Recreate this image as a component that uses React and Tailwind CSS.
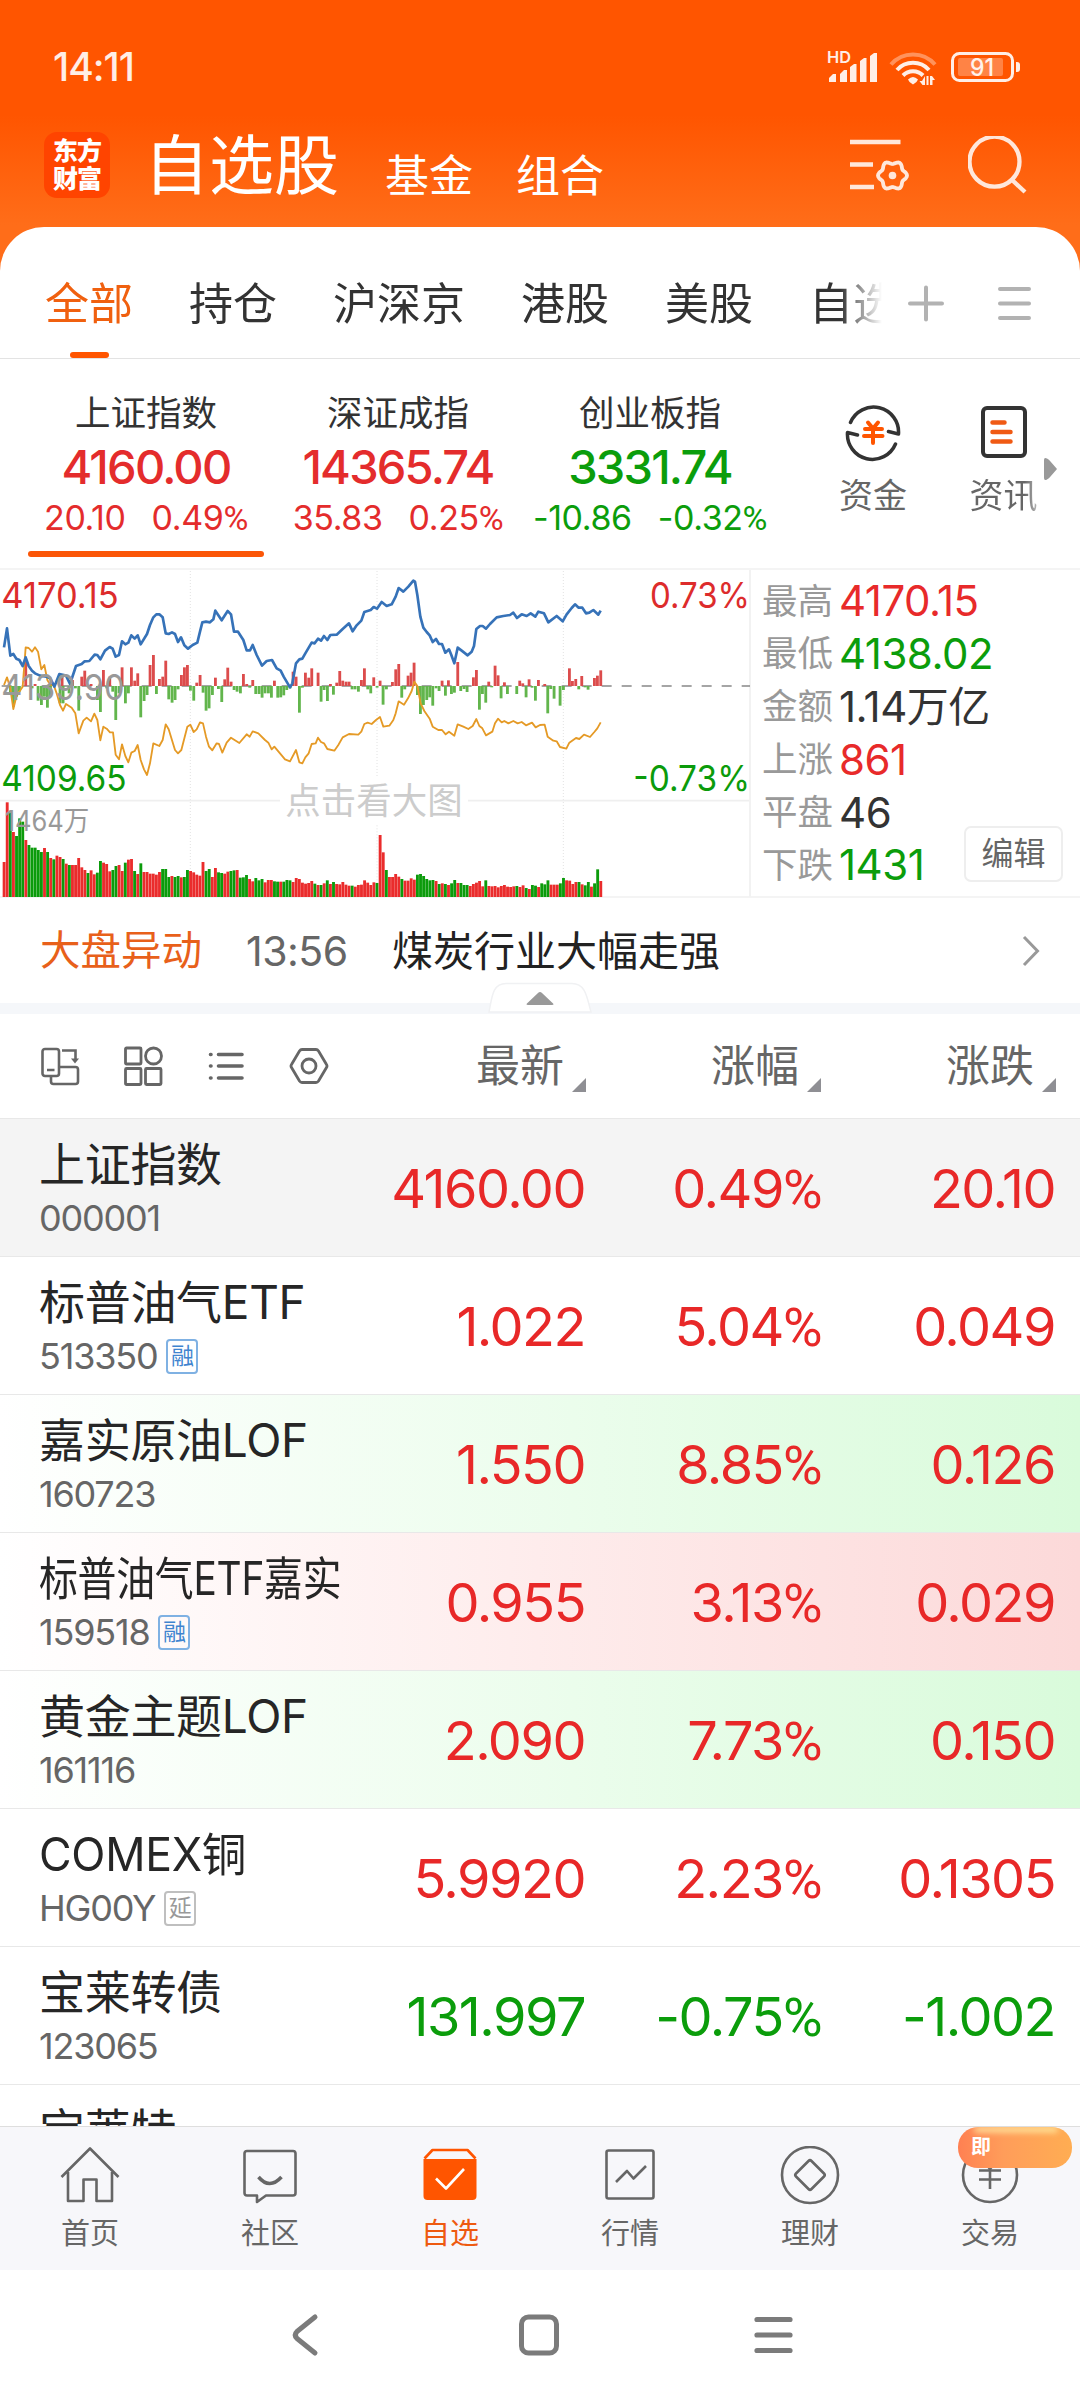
import React from 'react';
import clsx from 'clsx';

const tabs = ['全部', '持仓', '沪深京', '港股', '美股', '自选'];

const indices = [
  { name: '上证指数', value: '4160.00', change: '20.10', pct: '0.49%', up: true },
  { name: '深证成指', value: '14365.74', change: '35.83', pct: '0.25%', up: true },
  { name: '创业板指', value: '3331.74', change: '-10.86', pct: '-0.32%', up: false },
];

const stats = [
  { label: '最高', value: '4170.15', color: 'text-[#e82a2a]' },
  { label: '最低', value: '4138.02', color: 'text-[#0b9d0b]' },
  { label: '金额', value: '1.14万亿', color: 'text-[#333]' },
  { label: '上涨', value: '861', color: 'text-[#e82a2a]' },
  { label: '平盘', value: '46', color: 'text-[#333]' },
  { label: '下跌', value: '1431', color: 'text-[#0b9d0b]' },
];

const stocks = [
  { name: '上证指数', code: '000001', price: '4160.00', pct: '0.49%', change: '20.10', up: true, bg: 'bg-[#f4f4f4]' },
  { name: '标普油气ETF', code: '513350', tag: '融', price: '1.022', pct: '5.04%', change: '0.049', up: true },
  { name: '嘉实原油LOF', code: '160723', price: '1.550', pct: '8.85%', change: '0.126', up: true, bg: 'bg-linear-to-r from-white to-[#d9fbdb]' },
  { name: '标普油气ETF嘉实', code: '159518', tag: '融', price: '0.955', pct: '3.13%', change: '0.029', up: true, bg: 'bg-linear-to-r from-white to-[#fcd9d9]', fit: 'origin-left scale-x-[0.845]' },
  { name: '黄金主题LOF', code: '161116', price: '2.090', pct: '7.73%', change: '0.150', up: true, bg: 'bg-linear-to-r from-white to-[#d9fbdb]' },
  { name: 'COMEX铜', code: 'HG00Y', tag: '延', price: '5.9920', pct: '2.23%', change: '0.1305', up: true, fit: 'origin-left scale-x-[0.97]' },
  { name: '宝莱转债', code: '123065', price: '131.997', pct: '-0.75%', change: '-1.002', up: false },
  { name: '宝莱特' },
];

// Chart units are a third of a pixel. Volume tops, one per minute; negative means a falling minute.
const STEP = 9.323;
const volumes = [
  906, 727, -757, 816, -828, -775, -785, 840, -855, -863, -863, -870, -876, 864, -876, 894, -898, 887, 891, -897,
  911, -915, 915, 915, 894, 922, 930, -939, 931, 943, -938, -903, 908, 912, 934, -930, -918, 915, 933, -908,
  899, 897, -933, 942, -910, 936, 936, 941, 941, 944, 936, -927, -927, -951, 948, -951, -948, 952, -951, -930,
  933, 937, 944, 947, 906, -933, -927, 951, 924, -937, -939, 941, 935, -933, -931, 930, -953, -952, -945, 957,
  964, -954, -961, -957, 967, 960, 960, -964, -965, 965, -965, -960, -961, 966, 954, 957, 968, 971, 969, 963,
  -971, 975, -975, 970, -961, 972, -966, 972, 973, 966, 974, 977, -977, 980, 975, 974, 961, 968, 975, 967,
  -969, 825, 877, -930, 951, 951, 942, 950, -957, 962, 962, 955, 959, -944, -942, -948, -957, -961, -960, 963,
  -972, 970, -972, 975, -970, -960, 969, -969, -975, -975, 978, 972, 968, 963, 979, -961, 978, 979, 978, 982,
  978, 975, 980, 981, 979, -978, 981, 976, -984, 987, -975, -977, 981, -970, -973, -961, 974, 974, 974, -970,
  -954, 961, 962, 972, 966, -966, 973, -976, -966, 980, -970, -928, 963,
];

const MID = 378;
// [x, y] ends of the bars that grow from the middle line
const ticks = [
  [31, 400], [40, 440], [49, 410], [58, 395], [77, 305], [96, 385], [105, 372], [114, 422], [124, 435], [133, 410],
  [142, 443], [151, 410], [180, 430], [186, 350], [189, 430], [207, 400], [217, 360], [226, 385], [236, 452], [245, 350],
  [254, 332], [273, 372], [292, 420], [301, 456], [310, 330], [320, 385], [329, 350], [338, 395], [347, 480], [357, 400],
  [366, 322], [376, 430], [385, 400], [394, 322], [404, 362], [413, 340], [422, 472], [432, 423], [441, 405], [450, 315],
  [460, 285], [469, 402], [478, 357], [488, 350], [497, 302], [506, 418], [516, 428], [525, 420], [534, 388], [544, 345],
  [553, 322], [562, 315], [571, 392], [581, 422], [590, 368], [600, 345], [609, 398], [618, 452], [627, 445], [637, 405],
  [646, 353], [655, 387], [665, 426], [674, 358], [683, 323], [693, 365], [702, 390], [711, 395], [721, 400], [730, 342],
  [740, 372], [749, 383], [758, 360], [767, 402], [777, 402], [786, 413], [795, 400], [805, 400], [814, 413], [823, 362],
  [833, 413], [842, 412], [851, 406], [860, 390], [870, 385], [879, 335], [888, 350], [898, 458], [907, 383], [916, 338],
  [926, 353], [935, 325], [954, 338], [963, 425], [972, 390], [982, 423], [991, 372], [1000, 404], [1010, 368], [1019, 333],
  [1028, 362], [1038, 365], [1047, 365], [1056, 388], [1065, 388], [1075, 395], [1084, 360], [1093, 325], [1103, 388], [1112, 400],
  [1121, 352], [1131, 383], [1140, 362], [1149, 434], [1159, 388], [1177, 366], [1187, 328], [1196, 312], [1205, 413], [1214, 388],
  [1224, 347], [1233, 338], [1242, 308], [1252, 405], [1261, 462], [1270, 435], [1280, 420], [1289, 412], [1298, 437], [1308, 385],
  [1317, 393], [1326, 362], [1336, 407], [1345, 361], [1354, 402], [1363, 398], [1373, 306], [1382, 393], [1392, 387], [1401, 396],
  [1420, 352], [1429, 330], [1438, 449], [1447, 402], [1457, 428], [1466, 365], [1475, 382], [1485, 317], [1494, 346], [1503, 415],
  [1513, 367], [1522, 402], [1550, 402], [1559, 362], [1568, 370], [1578, 412], [1587, 358], [1596, 383], [1606, 422], [1615, 360],
  [1634, 372], [1643, 460], [1652, 387], [1662, 416], [1680, 437], [1690, 390], [1708, 325], [1717, 363], [1727, 357], [1736, 388],
  [1745, 348], [1755, 382], [1764, 389], [1783, 354], [1792, 347], [1802, 331],
];

const priceLine =
  '12,262 21,205 31,287 40,282 49,296 58,300 68,318 77,292 86,318 96,332 105,340 120,347 140,350 151,355 163,380 178,342 198,347 210,372 228,318 245,312 254,304 268,303 284,284 292,285 301,298 315,272 329,261 338,266 347,290 357,285 366,244 376,253 385,248 394,226 404,236 413,226 422,253 441,222 450,195 460,172 469,163 478,163 488,172 497,220 506,222 516,217 525,222 534,246 543,232 553,256 564,266 578,255 592,248 600,215 607,187 618,185 630,187 640,178 646,152 665,181 683,153 693,163 702,215 714,215 730,240 740,271 750,271 758,255 770,285 786,317 800,303 816,300 830,325 842,332 851,350 870,382 877,370 888,310 898,298 907,296 916,280 935,248 944,250 954,236 963,242 972,228 982,240 991,225 1010,224 1028,207 1047,190 1058,214 1070,196 1084,182 1093,156 1112,150 1121,141 1131,146 1145,126 1160,138 1175,133 1187,110 1196,84 1210,95 1225,80 1240,62 1245,65 1252,105 1261,170 1270,203 1280,216 1289,226 1298,246 1308,237 1317,252 1326,252 1336,278 1347,268 1354,285 1363,310 1373,263 1385,272 1403,286 1415,275 1422,258 1429,207 1440,198 1448,198 1458,206 1470,192 1490,172 1510,168 1530,165 1540,158 1551,174 1565,163 1580,168 1592,160 1606,170 1615,155 1632,160 1645,187 1670,168 1688,184 1700,163 1715,144 1725,133 1736,143 1747,143 1758,160 1768,158 1780,150 1795,164 1802,152';

const averageLine =
  '12,375 21,352 31,385 40,447 49,410 58,395 68,380 77,262 86,264 96,275 105,262 114,275 124,328 133,315 142,360 151,375 161,375 170,400 180,435 189,452 198,432 215,443 226,460 236,520 250,482 260,473 273,484 283,461 292,480 301,541 310,500 320,506 330,517 339,517 347,584 357,598 366,553 376,588 385,607 394,578 404,573 413,555 422,600 432,628 441,645 450,610 460,550 478,558 488,540 497,493 506,508 525,570 534,580 544,570 562,500 571,494 581,516 590,508 600,487 609,490 618,530 627,560 637,571 650,550 657,552 667,578 680,548 693,533 718,549 740,523 749,530 758,514 775,520 795,540 805,548 815,568 823,560 840,580 855,598 870,604 888,570 898,607 907,610 916,592 926,580 935,552 947,550 954,533 963,546 972,550 982,567 1003,572 1015,555 1028,532 1047,522 1075,524 1084,515 1093,492 1103,488 1115,492 1128,480 1140,471 1150,500 1168,497 1180,480 1187,460 1196,424 1212,434 1224,415 1235,393 1243,365 1252,378 1262,430 1273,453 1289,476 1298,500 1315,510 1326,510 1337,523 1347,515 1363,527 1373,493 1390,500 1405,507 1418,498 1429,477 1438,498 1447,505 1458,526 1477,515 1485,490 1494,476 1505,487 1513,483 1525,490 1540,483 1553,490 1565,486 1578,496 1596,488 1607,502 1620,495 1634,494 1643,530 1660,542 1670,544 1680,561 1699,566 1708,548 1728,534 1738,537 1752,524 1770,531 1783,516 1792,505 1802,487';

// six-lobed gear outline
const gear = Array.from({ length: 72 }, (_, i) => {
  const a = (i * Math.PI) / 36;
  const r = 13 + 1.5 * Math.cos(6 * a);
  return `${(42.5 + r * Math.cos(a)).toFixed(1)},${(39.5 + r * Math.sin(a)).toFixed(1)}`;
}).join(' ');

// The percent sign is set in a narrower face than the digits
const Num = ({ children }) =>
  children.endsWith('%') ? (
    <>
      {children.slice(0, -1)}
      <span className="font-['Roboto']">%</span>
    </>
  ) : (
    children
  );

const StatusBar = () => (
  <div className="flex h-[132px] items-center justify-between pt-px pr-[60px] pl-[53px] text-white/90">
    <span className="text-[39px] leading-none font-medium tracking-[-1px]">14:11</span>
    <svg width="194" height="38" viewBox="826 47 194 38" fill="currentColor">
      <text x="827" y="62" fontSize="16.500" fontWeight="600" textLength="24" lengthAdjust="spacingAndGlyphs">HD</text>
      <path d="M829 81v-4l4-4h3v8zM840 81v-8l4-4h3v12zM850 81v-15l4-3h2.500v18zM860 81v-21l4-3h2.500v24zM870 81v-26l4-3h3v29z" />
      <g fill="none" stroke="currentColor" strokeWidth="4">
        <path d="M891 63.500a29 29 0 0 1 44 0" opacity=".4" />
        <path d="M897 69a21.500 21.500 0 0 1 32 0" />
        <path d="M903 74.500a14 14 0 0 1 20 0" />
      </g>
      <path d="M908 78.500q5-5 10 0q-1 3-5 5q-4-2-5-5zM925 75v9h-2.500l-3-4h2.500zM930 84v-9h2l3 4h-2.500v5zM926.500 75h2v9h-2z" />
      <rect x="952.500" y="52.500" width="60" height="27" rx="7" fill="none" stroke="currentColor" strokeWidth="3" />
      <rect x="958" y="57" width="45" height="18" rx="2" opacity=".3" />
      <path d="M1016 61h1q3 0 3 3v4q0 3-3 3h-1z" />
      <text x="970" y="75" fontSize="24" fontWeight="500" textLength="24" lengthAdjust="spacingAndGlyphs">91</text>
    </svg>
  </div>
);

const Header = () => (
  <div className="flex h-[95px] items-start pr-[52px] pl-11 text-white">
    <div className="flex h-[66px] w-[66px] flex-col items-center justify-center gap-[2px] rounded-[13px] bg-[#ff4400] text-[25px] leading-[26px] font-black tracking-[-1px]">
      <span>东方</span>
      <span>财富</span>
    </div>
    <h1 className="ml-[34px] pt-px text-[65px] leading-[66px]">自选股</h1>
    <span className="mt-[22px] ml-[46px] text-[44px] leading-[44px]">基金</span>
    <span className="mt-[22px] ml-[43px] text-[44px] leading-[44px]">组合</span>
    <div className="ml-auto flex gap-[58px] pt-1 opacity-85">
      <svg width="60" height="60" viewBox="0 0 60 60" fill="none" stroke="currentColor" strokeWidth="4.300">
        <path d="M0 6h50.500M0 28.500h23M0 51h24" />
        <polygon points={gear} strokeWidth="3.800" strokeLinejoin="round" />
        <circle cx="42.500" cy="39.500" r="3.800" fill="currentColor" stroke="none" />
      </svg>
      <svg width="60" height="60" viewBox="0 0 60 60" fill="none" stroke="currentColor" strokeWidth="4.300">
        <circle cx="26.500" cy="25.700" r="25" />
        <path d="M43 43l14 13" />
      </svg>
    </div>
  </div>
);

const Tabs = () => (
  <div className="flex h-[132px] border-b border-[#e3e3e3]">
    <div className="flex w-[884px] gap-14 overflow-hidden pl-[45px] [mask-image:linear-gradient(to_right,black_840px,transparent_882px)]">
      {tabs.map((tab, i) => (
        <div key={tab} className={clsx('flex shrink-0 flex-col items-center pt-[55px] text-[44px] leading-[44px]', i === 0 ? 'text-[#f0600f]' : 'text-[#333]')}>
          {tab}
          {i === 0 && <div className="mt-auto h-[6px] w-[39px] rounded-full bg-[#ff5500]" />}
        </div>
      ))}
    </div>
    <div className="flex flex-1 items-start gap-[51px] pt-[56px] pl-[23px]">
      <svg width="38" height="40" viewBox="0 0 38 40" stroke="#b2b2b2" strokeWidth="4" strokeLinecap="round">
        <path d="M3 20.500h32M19 4.500v32" />
      </svg>
      <svg width="38" height="40" viewBox="0 0 38 40" stroke="#b2b2b2" strokeWidth="4" strokeLinecap="round">
        <path d="M4 6h29M4 20.500h29M4 35h29" />
      </svg>
    </div>
  </div>
);

const IndexStrip = () => (
  <div className="flex h-[209px] pl-5">
    {indices.map((item, i) => (
      <div key={item.name} className={clsx('flex w-[252px] flex-col items-center pt-[37px] leading-none', item.up ? 'text-[#e42c2c]' : 'text-[#0b9d0b]')}>
        <span className="text-[35.5px] leading-[36px] text-[#333]">{item.name}</span>
        <span className="mt-[12px] text-[47px] leading-[46px] font-medium tracking-[-1.8px]">{item.value}</span>
        <div className="mt-[10px] flex gap-[26px] text-[34px] leading-[36px] tracking-[-0.4px]">
          <span>{item.change}</span>
          <span>
            <Num>{item.pct}</Num>
          </span>
        </div>
        {i === 0 && <div className="mt-[15px] h-[6px] w-[236px] rounded-full bg-[#fb5607]" />}
      </div>
    ))}
    <div className="flex flex-1 pl-[32px] text-[34px] leading-[36px] text-[#666]">
      <div className="flex w-[130px] flex-col items-center pt-[43px]">
        <svg width="60" height="60" viewBox="0 0 60 60" fill="none" strokeLinecap="round" strokeLinejoin="round">
          <path d="M7.500 20.500a25 25 0 0 1 48 11.500l-10-2.500M52.500 42a25 25 0 0 1-48-11.500l10 2.500" stroke="#333" strokeWidth="3.500" />
          <path d="M25 20.500l5 6 5-6M22 27h17M21 34h18.500M30 27v14" stroke="#ff5500" strokeWidth="4" />
        </svg>
        <span className="mt-[16px]">资金</span>
      </div>
      <div className="flex w-[131px] flex-col items-center pt-[43px]">
        <svg width="60" height="60" viewBox="0 0 60 60" fill="none" strokeLinecap="round">
          <rect x="9" y="6" width="42" height="48" rx="4" stroke="#333" strokeWidth="4" />
          <path d="M18.500 20.500h12M18.500 30h18M18.500 39.500h18" stroke="#f05a14" strokeWidth="4.500" />
        </svg>
        <span className="mt-[16px] bg-linear-to-r from-[#666] from-80% to-[#bbb] bg-clip-text text-transparent">资讯</span>
      </div>
      <svg className="-ml-[26px] mt-[98px]" width="15" height="24" viewBox="0 0 15 24">
        <path d="M1 3q0-3 3-1.500q2 1 3.500 3l6.500 7.500l-6.500 7.500q-1.500 2-3.500 3q-3 1.500-3-1.500z" fill="#999" />
      </svg>
    </div>
  </div>
);

const MinuteChart = () => (
  <svg width="751" height="327" viewBox="0 30 2253 981" fill="none" className="shrink-0 overflow-visible">
    <path d="M571 33V1011M1131 33V650M1131 796V1011M1690 33V1011" stroke="#e2e2e2" strokeWidth="3" strokeDasharray="3 6" />
    <path d="M0 722H840M1404 722H2250" stroke="#efefef" strokeWidth="5" />
    <path d="M2250 30V1011" stroke="#f2f2f2" strokeWidth="6" />
    <path d={`M5 ${MID}H2250`} stroke="#888" strokeWidth="5" strokeDasharray="30 30" />
    {ticks.map(([x, y]) => (
      <rect key={x} x={x - 4} y={Math.min(y, MID)} width="8.500" height={Math.abs(y - MID)} fill={y < MID ? '#dc4c4c' : '#62b54c'} />
    ))}
    {volumes.map((v, i) => (
      <rect key={i} x={8 + i * STEP} y={Math.abs(v)} width="8.600" height={1011 - Math.abs(v)} fill={v > 0 ? '#ea2c2c' : '#0b9b0b'} />
    ))}
    <polyline points={averageLine} stroke="#e59a26" strokeWidth="5.500" strokeLinejoin="round" />
    <polyline points={priceLine} stroke="#3672b8" strokeWidth="8" strokeLinejoin="round" />
    <g fontSize="108">
      <text x="4" y="144" fill="#dd2c2c" textLength="352" lengthAdjust="spacingAndGlyphs">4170.15</text>
      <text x="4" y="419" fill="#999" textLength="370" lengthAdjust="spacingAndGlyphs">4139.90</text>
      <text x="4" y="692" fill="#0b9b0b" textLength="376" lengthAdjust="spacingAndGlyphs">4109.65</text>
      <text x="2250" y="144" fill="#dd2c2c" textAnchor="end" textLength="300" lengthAdjust="spacingAndGlyphs">0.73%</text>
      <text x="2250" y="692" fill="#0b9b0b" textAnchor="end" textLength="350" lengthAdjust="spacingAndGlyphs">-0.73%</text>
      <text x="856" y="763" fill="#ccc" textLength="532" lengthAdjust="spacingAndGlyphs">点击看大图</text>
    </g>
    <text x="14" y="812" fontSize="84" fill="#999" textLength="254" lengthAdjust="spacingAndGlyphs">1464万</text>
  </svg>
);

const MarketPanel = () => (
  <div className="flex h-[330px] border-y-2 border-[#f4f4f4]">
    <MinuteChart />
    <div className="flex flex-1 flex-col pt-[5px] pl-[11px]">
      {stats.map((s) => (
        <div key={s.label} className="flex h-[52.8px] items-center gap-[6px] leading-none">
          <span className="text-[35.5px] text-[#999]">{s.label}</span>
          <span className={clsx('text-[42px] tracking-[-0.5px]', s.color)}>{s.value}</span>
        </div>
      ))}
      <button className="-mt-[66px] mr-[17px] h-[56px] w-[99px] self-end rounded-[7px] border-2 border-[#eee] bg-white text-[32px] leading-none text-[#666]">
        编辑
      </button>
    </div>
  </div>
);

const NewsRow = () => (
  <div className="relative flex h-[116px] items-center border-b-[11px] border-[#f5f7fa] pt-px pr-[40px] pl-[40px] text-[41px] leading-none">
    <span className="text-[40.5px] text-[#e8601a]">大盘异动</span>
    <span className="ml-[44px] w-[103px] tracking-[-0.5px] text-[#666]">13:56</span>
    <span className="ml-[43px] text-[#222]">煤炭行业大幅走强</span>
    <svg className="ml-auto" width="18" height="32" viewBox="0 0 18 32" fill="none" stroke="#999" strokeWidth="3">
      <path d="M2 2l13.500 14L2 30" />
    </svg>
    <svg className="absolute top-[84px] left-[488px]" width="104" height="32" viewBox="0 0 104 32">
      <path d="M1 30C4 16 4 1.500 18 1.500H84C98 1.500 99 16 103 30z" fill="#fff" stroke="#f0f1f3" strokeWidth="1.500" />
      <path d="M40 20.500l10-9.500q2-2 4 0l10 9.500q3 2.500 0 2.500H40q-3 0 0-2.500z" fill="#999" />
    </svg>
  </div>
);

const ListHeader = () => (
  <div className="flex h-[105px] items-center border-b border-[#e8e8e8] pr-[24px] pl-[40px] text-[#666]">
    <div className="flex flex-1 gap-[43px]">
      <svg width="40" height="40" viewBox="0 0 40 40" fill="none" stroke="currentColor" strokeWidth="2.600">
        <rect x="2.500" y="3" width="16.500" height="27" rx="2.500" />
        <path d="M7 24h7.500M19 21h16.500q2.500 0 2.500 2.500v12q0 2.500-2.500 2.500H13.500q-2.500 0-2.500-2.500v-5M22 4.500h13.500V15" />
        <path d="M31 12.500h8l-4 5z" fill="currentColor" stroke="none" />
      </svg>
      <svg width="40" height="40" viewBox="0 0 40 40" fill="none" stroke="currentColor" strokeWidth="2.800">
        <rect x="2.500" y="2" width="15.500" height="16" rx="1" />
        <circle cx="30.500" cy="10" r="8" />
        <rect x="2.500" y="22.500" width="15.500" height="16" rx="1" />
        <rect x="22.500" y="22.500" width="15.500" height="16" rx="1" />
      </svg>
      <svg width="40" height="40" viewBox="0 0 40 40" fill="none" stroke="currentColor" strokeWidth="3.600" strokeLinecap="round">
        <path d="M12.500 8.500h23.500M12.500 20h23.500M12.500 32h23.500M4.500 8.500h.5M4.500 20h.5M4.500 32h.5" />
      </svg>
      <svg width="40" height="40" viewBox="0 0 40 40" fill="none" stroke="currentColor" strokeWidth="2.800" strokeLinejoin="round">
        <path d="M13 3.500h14q1.500 0 2.500 1.500l8 13.500q1 1.500 0 3l-8 13.500q-1 1.500-2.500 1.500H13q-1.500 0-2.500-1.500l-8-13.500q-1-1.500 0-3l8-13.500q1-1.500 2.500-1.500z" />
        <circle cx="20" cy="20" r="7" />
      </svg>
    </div>
    {['最新', '涨幅', '涨跌'].map((label) => (
      <div key={label} className="flex w-[235px] items-center justify-end gap-[8px] text-[44px] leading-none">
        {label}
        <svg className="mt-[38px]" width="14" height="14" viewBox="0 0 14 14" fill="#8f8f94">
          <path d="M14 0v14H0z" />
        </svg>
      </div>
    ))}
  </div>
);

const StockRow = ({ stock }) => (
  <div className={clsx('flex h-[138px] shrink-0 border-b border-[#e8e8e8] pr-[25px] pl-[39px] leading-none', stock.bg)}>
    <div className="flex-1 pt-[22px]">
      <div className={clsx('w-max text-[46px] leading-[46px] tracking-[-0.3px] text-[#262626]', stock.fit)}>{stock.name}</div>
      {stock.code && (
        <div className="mt-[12px] flex h-[38px] items-center gap-[9px] text-[36px] tracking-[-1.2px] text-[#666]">
          {stock.code}
          {stock.tag && (
            <span
              className={clsx(
                'flex h-[35px] w-[32px] items-center justify-center rounded-[4px] border-2 text-[23px] tracking-normal',
                stock.tag === '融' ? 'border-[#7fb1e3] text-[#3f84cf]' : 'border-[#bfbfbf] text-[#999]'
              )}
            >
              {stock.tag}
            </span>
          )}
        </div>
      )}
    </div>
    {stock.price && (
      <div className={clsx('flex items-center pt-[3px] text-right text-[54px] tracking-[-1.5px]', stock.up ? 'text-[#e82828]' : 'text-[#0b9d0b]')}>
        <span>{stock.price}</span>
        <span className="w-[236px]">
          <Num>{stock.pct}</Num>
        </span>
        <span className="w-[234px]">{stock.change}</span>
      </div>
    )}
  </div>
);

const navItems = [
  {
    label: '首页',
    icon: <path d="M1.500 30L30 1.500 58.500 30M8 25v29h15.500V32.500h13V54H52V25" />,
  },
  {
    label: '社区',
    icon: (
      <>
        <path d="M7 4h46q2.500 0 2.500 2.500V46q0 2.500-2.500 2.500H26L17 55v-6.500H7q-2.500 0-2.500-2.500V6.500Q4.500 4 7 4z" />
        <path d="M18.500 30q11 13 23 0" strokeWidth="3.500" />
      </>
    ),
  },
  {
    label: '自选',
    active: true,
    icon: (
      <>
        <path d="M3.500 12v37q0 4 4 4h45q4 0 4-4V12z" fill="#ff5500" stroke="none" />
        <path d="M4.500 11.500l8-8.500h35l8 8.500" stroke="#ff5500" />
        <path d="M16 31.500l10 10L44 22" stroke="#fff" />
      </>
    ),
  },
  {
    label: '行情',
    icon: (
      <>
        <rect x="6.500" y="3.500" width="47" height="48" rx="2" />
        <path d="M16 35l11-11 6.500 7.500L46 19" />
      </>
    ),
  },
  {
    label: '理财',
    icon: (
      <>
        <circle cx="30" cy="28" r="28" />
        <path d="M28.500 14q1.500-1.500 3 0L44 26.500q1.500 1.500 0 3L31.500 42q-1.500 1.500-3 0L16 29.500q-1.500-1.500 0-3z" />
      </>
    ),
  },
  {
    label: '交易',
    badge: '即',
    icon: (
      <>
        <circle cx="30" cy="28" r="27" />
        <path d="M22 12l8 10 8-10M19 23.500h22M19 32.500h22M30 22v20" />
      </>
    ),
  },
];

const BottomNav = () => (
  <div className="flex h-[144px] shrink-0 border-t border-[#dedede] bg-[#f7f7fa]">
    {navItems.map((item) => (
      <div key={item.label} className={clsx('relative flex w-[180px] flex-col items-center pt-[19px] text-[29px] leading-[30px]', item.active ? 'text-[#ee5a10]' : 'text-[#666]')}>
        <svg width="64" height="60" viewBox="-2 -1 64 60" fill="none" stroke="currentColor" strokeWidth="2.600" strokeLinejoin="round">
          {item.icon}
        </svg>
        <span className="mt-[13px]">{item.label}</span>
        {item.badge && (
          <div className="absolute top-0 right-[8px] h-[41px] w-[114px] overflow-hidden rounded-[20px] bg-linear-to-r from-[#ff8052] via-[#ff9d5a] via-40% to-[#ffad52]">
            <div className="ml-4 h-[5px] w-[84px] rounded-full bg-[#fff0a8] blur-[3px]" />
            <span className="ml-[13px] block text-[20px] leading-[30px] font-bold text-white">{item.badge}</span>
          </div>
        )}
      </div>
    ))}
  </div>
);

const SystemNav = () => (
  <div className="flex h-[130px] shrink-0 items-center justify-center gap-[194px] bg-white pr-[3px]">
    <svg width="40" height="44" viewBox="0 0 40 44" fill="none" stroke="#7b7b7b" strokeWidth="5" strokeLinecap="round" strokeLinejoin="round">
      <path d="M30 4L12 18.500q-3.500 3.500 0 7L30 40" />
    </svg>
    <svg width="40" height="44" viewBox="0 0 40 44" fill="none" stroke="#7b7b7b" strokeWidth="5">
      <rect x="2.500" y="4" width="35" height="36" rx="7" />
    </svg>
    <svg width="40" height="44" viewBox="0 0 40 44" fill="none" stroke="#7b7b7b" strokeWidth="5.200" strokeLinecap="round">
      <path d="M4 6.500h33M4 22h33M4 37.500h33" />
    </svg>
  </div>
);

const App = () => (
  <div className="flex h-[2400px] w-[1080px] flex-col overflow-hidden bg-white font-['Inter','Noto_Sans_CJK_SC',sans-serif]">
    <div className="shrink-0 bg-[linear-gradient(to_bottom,#ff5500_115px,#ff6d19_225px)]">
      <StatusBar />
      <Header />
      <div className="rounded-t-[44px] bg-white">
        <Tabs />
      </div>
    </div>
    <div className="shrink-0">
      <IndexStrip />
      <MarketPanel />
      <NewsRow />
      <ListHeader />
    </div>
    <div className="flex flex-1 flex-col overflow-hidden">
      {stocks.map((stock) => (
        <StockRow key={stock.name} stock={stock} />
      ))}
    </div>
    <BottomNav />
    <SystemNav />
  </div>
);

export default App;
